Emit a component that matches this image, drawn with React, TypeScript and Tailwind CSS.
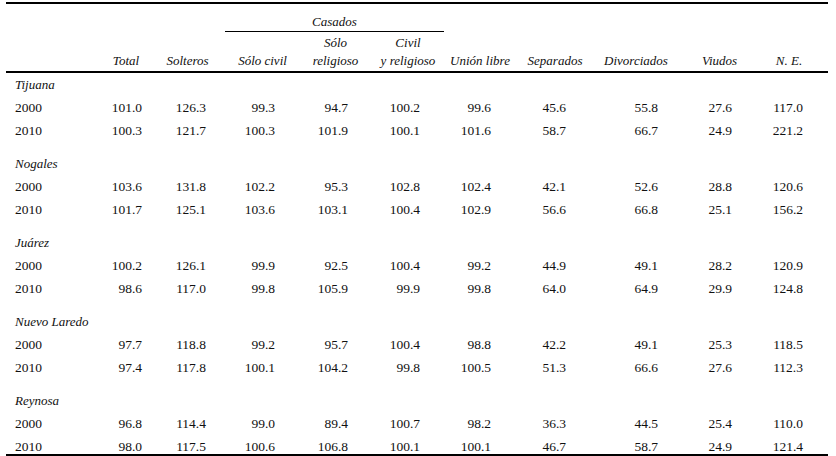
const cols = "grid grid-cols-[94px_52px_71px_79px_67px_78px_66px_84px_78px_89px_50px_14px]";

// right padding for each numeric column so the figures line up under their header
const pads = ["pr-[10px]", "pr-[17px]", "pr-[27px]", "pr-[21px]", "pr-[27px]", "pr-[22px]", "pr-[31px]", "pr-[17px]", "pr-[32px]", "pr-[11px]"];

const cities = [
  {
    name: "Tijuana",
    rows: [
      ["2000", "101.0", "126.3", "99.3", "94.7", "100.2", "99.6", "45.6", "55.8", "27.6", "117.0"],
      ["2010", "100.3", "121.7", "100.3", "101.9", "100.1", "101.6", "58.7", "66.7", "24.9", "221.2"],
    ],
  },
  {
    name: "Nogales",
    rows: [
      ["2000", "103.6", "131.8", "102.2", "95.3", "102.8", "102.4", "42.1", "52.6", "28.8", "120.6"],
      ["2010", "101.7", "125.1", "103.6", "103.1", "100.4", "102.9", "56.6", "66.8", "25.1", "156.2"],
    ],
  },
  {
    name: "Juárez",
    rows: [
      ["2000", "100.2", "126.1", "99.9", "92.5", "100.4", "99.2", "44.9", "49.1", "28.2", "120.9"],
      ["2010", "98.6", "117.0", "99.8", "105.9", "99.9", "99.8", "64.0", "64.9", "29.9", "124.8"],
    ],
  },
  {
    name: "Nuevo Laredo",
    rows: [
      ["2000", "97.7", "118.8", "99.2", "95.7", "100.4", "98.8", "42.2", "49.1", "25.3", "118.5"],
      ["2010", "97.4", "117.8", "100.1", "104.2", "99.8", "100.5", "51.3", "66.6", "27.6", "112.3"],
    ],
  },
  {
    name: "Reynosa",
    rows: [
      ["2000", "96.8", "114.4", "99.0", "89.4", "100.7", "98.2", "36.3", "44.5", "25.4", "110.0"],
      ["2010", "98.0", "117.5", "100.6", "106.8", "100.1", "100.1", "46.7", "58.7", "24.9", "121.4"],
    ],
  },
];

function Head({ children }: { children: React.ReactNode }) {
  return <div className="flex items-end justify-center pb-[1px] text-center italic leading-[18px]">{children}</div>;
}

export default function App() {
  return (
    <div className="h-[456px] w-[836px] overflow-hidden bg-white [font-family:Liberation_Serif,Times_New_Roman,serif] text-[13px] text-[#111]">
      <div className="ml-[6px] w-[822px] pt-[2px]">
        {/* header */}
        <div className={`${cols} grid-rows-[28px_39px] border-t-2 border-b-2 border-black`}>
          <div className="col-start-4 col-span-3 row-start-1 ml-[2px] mr-[3px] flex items-end justify-center border-b border-black pb-[2px] italic leading-[15px]">
            Casados
          </div>
          <div className="col-start-2 row-start-2 flex justify-center">
            <Head>Total</Head>
          </div>
          <div className="col-start-3 row-start-2 flex justify-center">
            <Head>Solteros</Head>
          </div>
          <div className="col-start-4 row-start-2 flex justify-center">
            <Head>Sólo civil</Head>
          </div>
          <div className="col-start-5 row-start-2 flex justify-center">
            <Head>
              Sólo
              <br />
              religioso
            </Head>
          </div>
          <div className="col-start-6 row-start-2 flex justify-center">
            <Head>
              Civil
              <br />y religioso
            </Head>
          </div>
          <div className="col-start-7 row-start-2 flex justify-center">
            <Head>Unión libre</Head>
          </div>
          <div className="col-start-8 row-start-2 flex justify-center">
            <Head>Separados</Head>
          </div>
          <div className="col-start-9 row-start-2 flex justify-center">
            <Head>Divorciados</Head>
          </div>
          <div className="col-start-10 row-start-2 flex justify-center">
            <Head>Viudos</Head>
          </div>
          <div className="col-start-11 row-start-2 flex justify-center">
            <Head>N. E.</Head>
          </div>
        </div>

        {/* body */}
        <div className="border-b-2 border-black">
          {cities.map((city, ci) => (
            <div key={city.name} className={ci > 0 ? "pt-[10px]" : ""}>
              <div className="h-[23px] pl-[9px] italic leading-[23px]">{city.name}</div>
              {city.rows.map((row, ri) => {
                const last = ci === cities.length - 1 && ri === city.rows.length - 1;
                return (
                  <div key={row[0]} className={`${cols} ${last ? "h-[19px]" : "h-[23px]"} text-[13.5px] leading-[23px]`}>
                    <div className="pl-[9px]">{row[0]}</div>
                    {row.slice(1).map((v, i) => (
                      <div key={i} className={`text-right ${pads[i]}`}>
                        {v}
                      </div>
                    ))}
                  </div>
                );
              })}
            </div>
          ))}
        </div>
      </div>
    </div>
  );
}
